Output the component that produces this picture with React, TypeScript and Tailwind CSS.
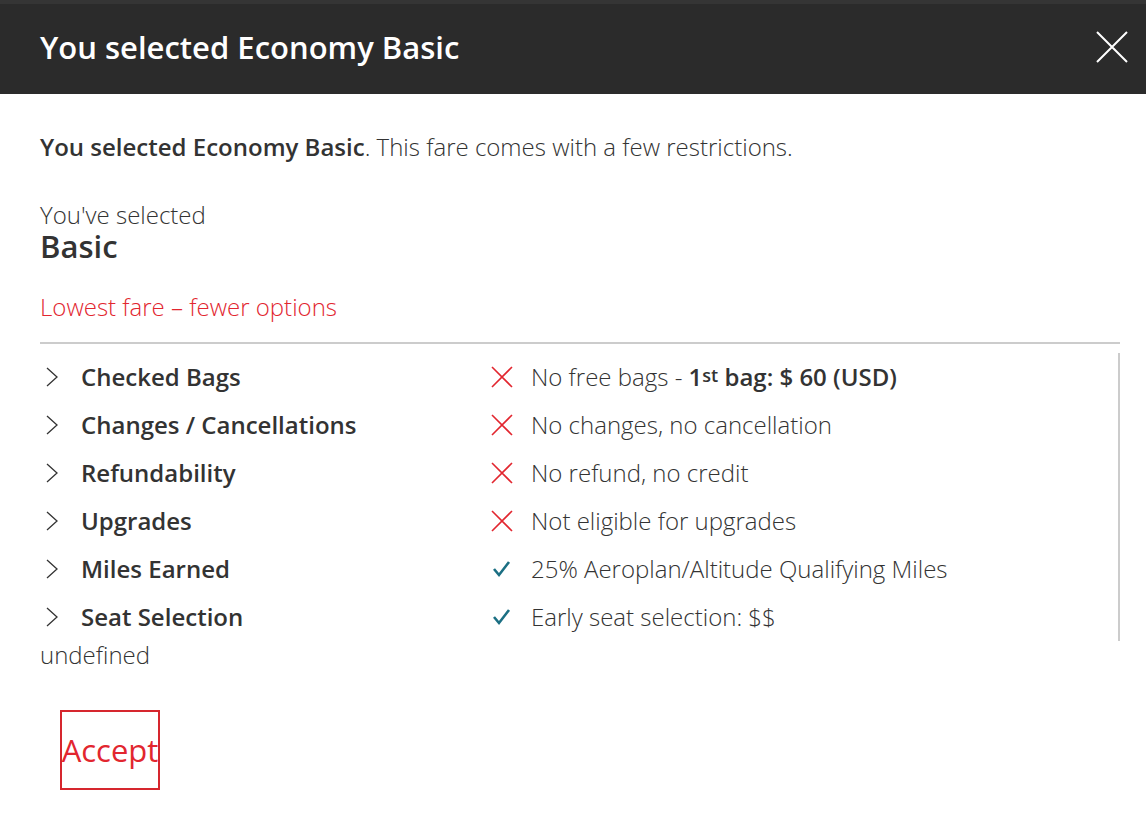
import { ReactNode } from 'react'

interface FareRow {
  label: string
  ok: boolean
  text: ReactNode
}

const rows: FareRow[] = [
  {
    label: 'Checked Bags',
    ok: false,
    text: (
      <>
        No free bags - <b className="font-semibold">1<sup className="text-[0.75em] relative -top-[0.25em]">st</sup> bag: $ 60 (USD)</b>
      </>
    ),
  },
  { label: 'Changes / Cancellations', ok: false, text: 'No changes, no cancellation' },
  { label: 'Refundability', ok: false, text: 'No refund, no credit' },
  { label: 'Upgrades', ok: false, text: 'Not eligible for upgrades' },
  { label: 'Miles Earned', ok: true, text: '25% Aeroplan/Altitude Qualifying Miles' },
  { label: 'Seat Selection', ok: true, text: 'Early seat selection: $$' },
]

function Chevron() {
  return (
    <svg width="14" height="22" viewBox="0 0 14 22" className="shrink-0">
      <path d="M2 2 L12 11 L2 20" fill="none" stroke="#333" strokeWidth="1.3" />
    </svg>
  )
}

function Cross() {
  return (
    <svg width="24" height="24" viewBox="0 0 24 24" className="shrink-0">
      <path d="M2 2 L22 22 M22 2 L2 22" stroke="#e2262f" strokeWidth="1.6" />
    </svg>
  )
}

function Check() {
  return (
    <svg width="24" height="24" viewBox="0 0 24 24" className="shrink-0">
      <path d="M4 12 L9 18 L19 5" fill="none" stroke="#1b6f83" strokeWidth="2.6" />
    </svg>
  )
}

export default function App() {
  return (
    <div className="w-[1146px] h-[816px] bg-white text-[#333] font-['Open_Sans',sans-serif]">
      <div className="h-[94px] bg-[#2b2b2b] border-t-4 border-[#353535] flex items-center justify-between pl-10 pr-[18px]">
        <h1 className="text-[31px] font-semibold text-white -mt-1">You selected Economy Basic</h1>
        <svg width="32" height="32" viewBox="0 0 32 32" className="-mt-1">
          <path d="M1 1 L31 31 M31 1 L1 31" stroke="#fff" strokeWidth="2" />
        </svg>
      </div>

      <div className="px-10 pt-[38px]">
        <p className="text-[24px] leading-[30px] font-light">
          <b className="font-semibold">You selected Economy Basic</b>. This fare comes with a few restrictions.
        </p>

        <p className="mt-[41px] text-[24px] leading-[24px] font-light">
          You've selected
          <br />
          <strong className="text-[31px] leading-[38px] font-semibold">Basic</strong>
        </p>

        <div className="mt-[27px] text-[24px] leading-[30px] font-light text-[#e2262f]">Lowest fare – fewer options</div>

        <div className="mt-[20px] w-[1080px] border-t-2 border-[#cccccc] relative">
          <div className="absolute right-[0px] top-[9px] w-[2px] h-[288px] bg-[#cccccc]" />
          <div className="pt-[9px]">
            {rows.map((r) => (
              <div key={r.label} className="flex items-center h-12">
                <div className="w-[450px] flex items-center gap-[22px] pl-[5px]">
                  <Chevron />
                  <span className="text-[24px] font-semibold">{r.label}</span>
                </div>
                <div className="flex items-center gap-[17px]">
                  {r.ok ? <Check /> : <Cross />}
                  <span className="text-[24px] font-light">{r.text}</span>
                </div>
              </div>
            ))}
          </div>
        </div>

        <div className="text-[24px] leading-[28px] font-light">undefined</div>

        <button className="mt-[41px] ml-5 w-[100px] h-[80px] border-2 border-[#d6262e] text-[#e2262f] text-[31px] font-normal flex items-center justify-center whitespace-nowrap">
          Accept
        </button>
      </div>
    </div>
  )
}
